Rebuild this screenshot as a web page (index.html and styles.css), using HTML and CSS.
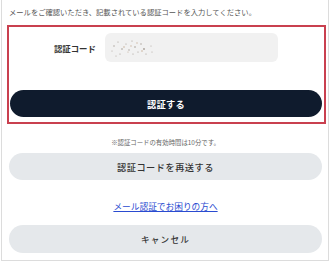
FILE: index.html
```html
<!DOCTYPE html>
<html lang="ja">
<head>
  <meta charset="UTF-8" />
  <meta name="viewport" content="width=device-width, initial-scale=1.0"/>
  <title>メール認証</title>
  <link rel="stylesheet" href="styles.css">
</head>
<body>

  <div class="frame">
    <p class="lead">メールをご確認いただき、記載されている認証コードを入力してください。</p>

    <!-- Code form -->
    <div class="verify">
      <div class="row">
        <label class="label" for="code">認証コード</label>
        <div class="field">
          <svg class="noise" width="48" height="22" viewBox="0 0 48 22">
            <g fill="#9a8f86">
              <circle cx="6" cy="9" r="0.7"/><circle cx="10" cy="5" r="0.6"/><circle cx="14" cy="12" r="0.8"/>
              <circle cx="18" cy="7" r="0.6"/><circle cx="21" cy="13" r="0.7"/><circle cx="24" cy="4" r="0.6"/>
              <circle cx="27" cy="10" r="0.8"/><circle cx="30" cy="15" r="0.6"/><circle cx="33" cy="7" r="0.7"/>
              <circle cx="36" cy="12" r="0.9"/><circle cx="38" cy="17" r="0.6"/><circle cx="12" cy="17" r="0.6"/>
              <circle cx="4" cy="14" r="0.5"/><circle cx="43" cy="9" r="0.5"/><circle cx="44" cy="15" r="0.5"/>
              <circle cx="8" cy="19" r="0.5"/><circle cx="25" cy="17" r="0.6"/>
            </g>
            <g fill="#c4a88e">
              <circle cx="16" cy="10" r="0.8"/><circle cx="29" cy="6" r="0.7"/><circle cx="34" cy="14" r="0.8"/>
              <circle cx="20" cy="15" r="0.6"/><circle cx="23" cy="9" r="0.7"/>
            </g>
          </svg>
        </div>
      </div>
      <button class="btn btn-dark">認証する</button>
    </div>

    <p class="note">※認証コードの有効時間は10分です。</p>
    <button class="btn btn-gray">認証コードを再送する</button>

    <a class="help" href="#">メール認証でお困りの方へ</a>
    <button class="btn btn-gray btn-cancel">キャンセル</button>
  </div>

</body>
</html>
```

FILE: styles.css
```css
body {
  margin: 0;
  background: #fff;
  font-family: "Noto Sans CJK JP", "Noto Sans", sans-serif;
  color: #333;
}

.frame {
  margin-left: 1px;
  width: 328px;
  height: 261px;
  box-sizing: border-box;
  border: 1px solid #dcdcdc;
  border-top: none;
  padding: 0 6px 0 7px;
  display: flex;
  flex-direction: column;
}

.lead {
  margin: 0;
  padding-top: 7px;
  height: 18px;
  font-size: 7.3px;
  line-height: 10px;
  color: #555;
  white-space: nowrap;
}

.verify {
  margin: 0 -4px 0 -2px;
  border: 2px solid #c9404f;
  padding: 6px 2px 5px 1px;
}

.row {
  display: flex;
  align-items: center;
  height: 29px;
  margin-bottom: 28px;
}

.label {
  width: 44px;
  margin-left: 44px;
  margin-right: 7px;
  font-size: 8.4px;
  font-weight: bold;
  color: #333;
  white-space: nowrap;
}

.field {
  width: 173px;
  height: 29px;
  background: #f1f1f1;
  border-radius: 6px;
  display: flex;
  align-items: center;
}

.noise {
  margin-left: 3px;
  opacity: 0.85;
}

.btn {
  display: block;
  width: 100%;
  height: 27px;
  border: none;
  border-radius: 14px;
  font-family: inherit;
  cursor: pointer;
  padding: 0;
}

.btn-dark {
  background: #0f1b2d;
  color: #fff;
  font-weight: bold;
  font-size: 9.2px;
  letter-spacing: 0.3px;
}

.note {
  margin: 0;
  height: 29px;
  line-height: 10px;
  padding-top: 14px;
  box-sizing: border-box;
  text-align: center;
  font-size: 6.4px;
  color: #666;
}

.btn-gray {
  background: #e5e8eb;
  color: #333;
  font-size: 9.2px;
  font-weight: 500;
  letter-spacing: 0.5px;
}

.help {
  display: block;
  margin: 20px 0 0;
  height: 25px;
  line-height: 14px;
  text-align: center;
  font-size: 8.7px;
  color: #2a4bd0;
}

.btn-cancel {
  height: 28px;
  font-size: 8.6px;
  letter-spacing: 1.2px;
}
```
